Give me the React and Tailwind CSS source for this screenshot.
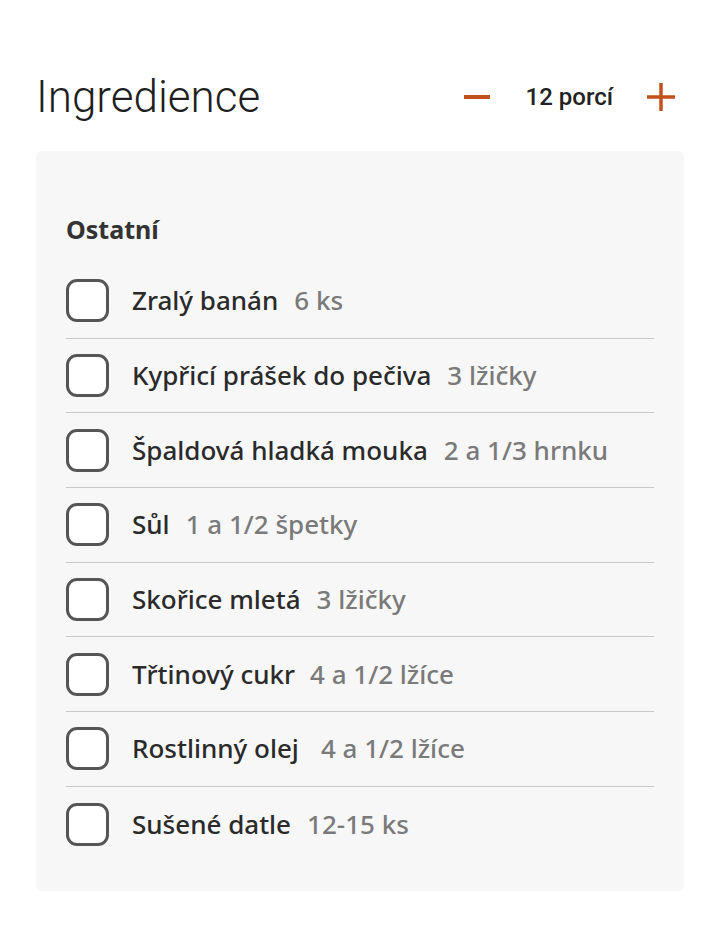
import React from "react";

const items = [
  ["Zralý banán", "6 ks", "ml-[16px]"],
  ["Kypřicí prášek do pečiva", "3 lžičky", "ml-[16px]"],
  ["Špaldová hladká mouka", "2 a 1/3 hrnku", "ml-[16px]"],
  ["Sůl", "1 a 1/2 špetky", "ml-[16px]"],
  ["Skořice mletá", "3 lžičky", "ml-[16px]"],
  ["Třtinový cukr", "4 a 1/2 lžíce", "ml-[15px]"],
  ["Rostlinný olej", "4 a 1/2 lžíce", "ml-[22px]"],
  ["Sušené datle", "12-15 ks", "ml-[16px]"],
];

export default function App() {
  return (
    <div className="w-[720px] h-[926px] bg-white pt-[70px]">
      <div className="flex items-center justify-between pl-[36px] pr-[45px] h-[54px]">
        <h1 className="text-[44px] leading-[54px] font-light text-[#1f1f1f] [font-family:Roboto,sans-serif]">
          Ingredience
        </h1>
        <div className="flex items-center">
          <button className="w-[26px] h-[28px] flex items-center justify-center">
            <span className="block w-[26px] h-[3.5px] bg-[#c2521b]" />
          </button>
          <span className="ml-[36px] text-[24px] font-medium text-[#222] [font-family:Roboto,sans-serif]">
            12 porcí
          </span>
          <button className="ml-[34px] w-[28px] h-[28px] flex items-center justify-center">
            <svg width="28" height="28" viewBox="0 0 28 28">
              <path d="M14 0V28M0 14H28" stroke="#c2521b" strokeWidth="3.5" />
            </svg>
          </button>
        </div>
      </div>
      <div className="mx-[36px] mt-[27px] bg-[#f7f7f7] rounded-[6px] pt-[62px] pl-[30px] pr-[30px] pb-[29px] [font-family:'Noto_Sans',sans-serif]">
        <h2 className="text-[25px] leading-[32px] font-bold text-[#333]">Ostatní</h2>
        <ul className="mt-[19px]">
          {items.map(([name, amt, gap], i) => (
            <li
              key={i}
              className={
                "flex items-center h-[74.7px] " +
                (i < items.length - 1 ? "border-b-[1.5px] border-[#c8c8c8]" : "")
              }
            >
              <span className="w-[43px] h-[43px] rounded-[11px] border-[3px] border-[#555] bg-white shrink-0" />
              <span className="ml-[23px] text-[26px] font-medium text-[#2a2a2a]">{name}</span>
              <span className={gap + " text-[26px] font-medium text-[#7a7a7a]"}>{amt}</span>
            </li>
          ))}
        </ul>
      </div>
    </div>
  );
}
